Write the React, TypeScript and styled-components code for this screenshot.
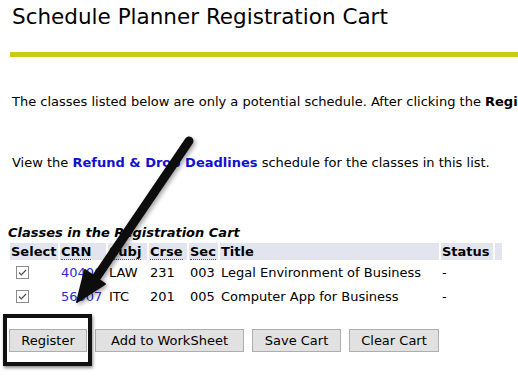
import React from "react";
import styled, { createGlobalStyle } from "styled-components";

const GlobalStyle = createGlobalStyle`
  html, body {
    margin: 0;
    padding: 0;
    background: #ffffff;
  }
  body {
    font-family: "DejaVu Sans", Verdana, sans-serif;
    color: #000;
    overflow: hidden;
  }
`;

const Page = styled.div`
  position: relative;
  width: 518px;
  height: 376px;
  padding-left: 10px;
  box-sizing: border-box;
  overflow: hidden;
`;

const Title = styled.h1`
  margin: 4px 0 0 2px;
  font-size: 21.5px;
  line-height: 26px;
  font-weight: normal;
  white-space: nowrap;
`;

const Rule = styled.div`
  margin-top: 22px;
  height: 5px;
  background: #cbcb15;
`;

const Para = styled.p<{ $gap: number }>`
  margin: ${(p) => p.$gap}px 0 0 2px;
  font-size: 13px;
  line-height: 16px;
  white-space: nowrap;
`;

const LinkBold = styled.a`
  color: #1010d0;
  font-weight: bold;
  text-decoration: none;
`;

const Caption = styled.div`
  margin: 54px 0 0 -2px;
  font-size: 13px;
  line-height: 16px;
  font-weight: bold;
  font-style: italic;
`;

const Table = styled.table`
  margin-left: -2px;
  border-spacing: 2px;
  table-layout: fixed;
  font-size: 13px;
`;

const Th = styled.th<{ $w: number }>`
  width: ${(p) => p.$w}px;
  height: 17px;
  padding: 0 0 0 1px;
  background: #e2e4ee;
  text-align: left;
  font-weight: bold;
  line-height: 16px;
  white-space: nowrap;
`;

const Abbr = styled.abbr`
  text-decoration: none;
  border-bottom: 1px dotted #555;
`;

const Td = styled.td<{ $indent?: number }>`
  height: 22px;
  padding: 0 0 0 ${(p) => p.$indent ?? 1}px;
  line-height: 16px;
  white-space: nowrap;
  text-align: left;
`;

const CrnLink = styled.a`
  color: #2a2ad0;
  text-decoration: none;
`;

const CheckBox = styled.span`
  display: inline-block;
  width: 11px;
  height: 11px;
  border: 1px solid #8a8a8a;
  background: #fff;
  vertical-align: -2px;
  svg {
    display: block;
  }
`;

const Buttons = styled.div`
  display: flex;
  gap: 8px;
  margin: 19px 0 0 -1px;
`;

const Button = styled.button<{ $w: number }>`
  width: ${(p) => p.$w}px;
  height: 23px;
  padding: 0;
  border: 1px solid #adadad;
  background: #e1e1e1;
  font-family: "DejaVu Sans", Verdana, sans-serif;
  font-size: 13px;
  color: #000;
`;

const Highlight = styled.div`
  position: absolute;
  left: 3px;
  top: 314px;
  width: 89px;
  height: 52px;
  box-sizing: border-box;
  border: 4px solid #111;
  box-shadow: 1px 2px 3px rgba(0, 0, 0, 0.45);
  pointer-events: none;
`;

const Overlay = styled.svg`
  position: absolute;
  left: 0;
  top: 0;
  pointer-events: none;
`;

const rows = [
  { crn: "40400", subj: "LAW", crse: "231", sec: "003", title: "Legal Environment of Business" },
  { crn: "56907", subj: "ITC", crse: "201", sec: "005", title: "Computer App for Business" },
];

function Check() {
  return (
    <CheckBox>
      <svg width="11" height="11" viewBox="0 0 11 11">
        <path d="M2 5.5 L4.3 7.8 L9 3" fill="none" stroke="#4a4a4a" strokeWidth="1.2" />
      </svg>
    </CheckBox>
  );
}

export default function App() {
  return (
    <Page>
      <GlobalStyle />
      <Title>Schedule Planner Registration Cart</Title>
      <Rule />
      <Para $gap={37}>
        The classes listed below are only a potential schedule. After clicking the <b>Register</b> button, your classes will be added.
      </Para>
      <Para $gap={45}>
        View the <LinkBold href="#">Refund &amp; Drop Deadlines</LinkBold> schedule for the classes in this list.
      </Para>
      <Caption>Classes in the Registration Cart</Caption>
      <Table>
        <thead>
          <tr>
            <Th $w={47}>Select</Th>
            <Th $w={45}><Abbr>CRN</Abbr></Th>
            <Th $w={38}><Abbr>Subj</Abbr></Th>
            <Th $w={37}><Abbr>Crse</Abbr></Th>
            <Th $w={28}><Abbr>Sec</Abbr></Th>
            <Th $w={218}>Title</Th>
            <Th $w={51}>Status</Th>
            <Th $w={6}></Th>
          </tr>
        </thead>
        <tbody>
          {rows.map((r) => (
            <tr key={r.crn}>
              <Td $indent={6}><Check /></Td>
              <Td><CrnLink href="#">{r.crn}</CrnLink></Td>
              <Td>{r.subj}</Td>
              <Td>{r.crse}</Td>
              <Td>{r.sec}</Td>
              <Td>{r.title}</Td>
              <Td>-</Td>
              <Td></Td>
            </tr>
          ))}
        </tbody>
      </Table>
      <Buttons>
        <Button $w={78}>Register</Button>
        <Button $w={149}>Add to WorkSheet</Button>
        <Button $w={89}>Save Cart</Button>
        <Button $w={90}>Clear Cart</Button>
      </Buttons>
      <Highlight />
      <Overlay width="518" height="376" viewBox="0 0 518 376">
        <defs>
          <filter id="sh" x="-20%" y="-20%" width="140%" height="140%">
            <feDropShadow dx="2" dy="2" stdDeviation="2" floodColor="#000" floodOpacity="0.35" />
          </filter>
        </defs>
        <g filter="url(#sh)" fill="#111" stroke="#111">
          <line x1="189" y1="141" x2="96" y2="278" strokeWidth="9" strokeLinecap="round" />
          <polygon points="77,302 85,270 105,284" strokeWidth="2" strokeLinejoin="round" />
        </g>
      </Overlay>
    </Page>
  );
}
